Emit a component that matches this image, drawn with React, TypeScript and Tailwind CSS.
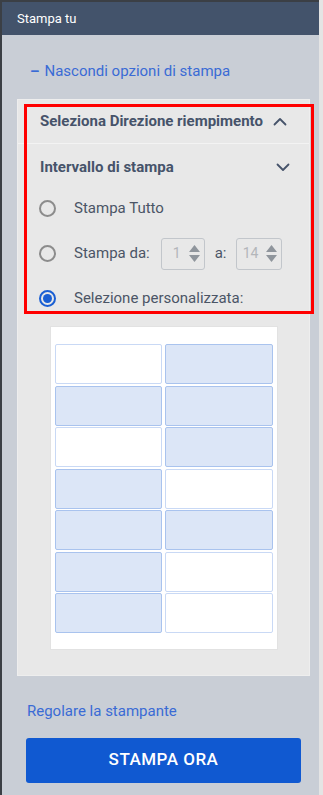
import { type ReactNode } from 'react';

const font = { fontFamily: 'Roboto, "Noto Sans", sans-serif' };

/** Selected state of each label cell, row by row (left, right) */
const labels: boolean[][] = [
  [false, true],
  [true, true],
  [false, true],
  [true, false],
  [true, true],
  [true, false],
  [true, false],
];

function Chevron({ up }: { up?: boolean }) {
  return (
    <svg className="h-[14px] w-[14px] text-[#46536a]" viewBox="0 0 14 14" fill="none" aria-hidden="true">
      <path
        d={up ? 'M1.5 9.5L7 4l5.5 5.5' : 'M1.5 4.5L7 10l5.5-5.5'}
        stroke="currentColor"
        strokeWidth={1.8}
        strokeLinecap="round"
        strokeLinejoin="round"
      />
    </svg>
  );
}

function Radio({ checked, children }: { checked?: boolean; children: ReactNode }) {
  return (
    <div className="flex h-[45px] items-center pl-[21px]">
      {checked ? (
        <span className="flex h-[17px] w-[17px] items-center justify-center rounded-full border-2 border-[#1a5fd3]">
          <span className="h-[9px] w-[9px] rounded-full bg-[#1a5fd3]" />
        </span>
      ) : (
        <span className="h-[17px] w-[17px] rounded-full border-2 border-[#8c8c8c]" />
      )}
      <div className="ml-[18px] flex items-center text-[15px] text-[#4b5566]">{children}</div>
    </div>
  );
}

function Spinner({ value, width }: { value: string; width: string }) {
  return (
    <div
      className={`flex h-[32px] ${width} items-center justify-end rounded-[3px] border border-[#c2c6cb] pr-[4px] text-[14px] text-[#b3b6ba]`}
    >
      <span className="mr-[8px]">{value}</span>
      <span className="flex flex-col gap-[3px]">
        <svg width="11" height="7" viewBox="0 0 11 7" aria-hidden="true">
          <path d="M5.5 0L11 7H0z" fill="#8f959c" />
        </svg>
        <svg width="11" height="7" viewBox="0 0 11 7" aria-hidden="true">
          <path d="M0 0h11L5.5 7z" fill="#8f959c" />
        </svg>
      </span>
    </div>
  );
}

export default function App() {
  return (
    <div className="flex h-[795px] w-[323px] bg-[#e4e4e4]" style={font}>
      <div className="relative flex h-full w-[319px] flex-col border-l-2 border-t-2 border-[#3b3f45] bg-[#c9ced6]">
        <div className="flex h-[33px] items-center bg-[#43536b] pl-[15px] text-[13px] text-white">
          Stampa tu
        </div>

        <div className="flex h-[64px] items-center pl-[28px] pt-[8px] text-[15px] text-[#3a6bd5]">
          <span className="mr-[5px] font-bold">–</span>Nascondi opzioni di stampa
        </div>

        <div className="ml-[15px] w-[293px] border border-[#eeeeee] bg-[#e8e8e8] pb-[25px]">
          <div className="flex h-[44px] items-center border-b border-[#f3f3f3] pl-[22px] text-[15px] font-bold text-[#46536a]">
            Seleziona Direzione riempimento
            <span className="ml-[10px]">
              <Chevron up />
            </span>
          </div>

          <div className="flex h-[42px] items-center justify-between pl-[22px] pr-[19px] pt-[4px] text-[15px] font-bold text-[#46536a]">
            Intervallo di stampa
            <Chevron />
          </div>

          <Radio>Stampa Tutto</Radio>
          <Radio>
            Stampa da:
            <div className="ml-[11px]">
              <Spinner value="1" width="w-[44px]" />
            </div>
            <span className="ml-[10px] mr-[10px]">a:</span>
            <Spinner value="14" width="w-[46px]" />
          </Radio>
          <Radio checked>Selezione personalizzata:</Radio>

          <div className="mx-auto mt-[5px] w-[228px] border border-[#e2e2e2] bg-white pb-[16px] pl-[4px] pr-[4px] pt-[17px]">
            <div className="grid grid-cols-2 gap-x-[3px] gap-y-[1.5px]">
              {labels.flat().map((on, i) => (
                <div
                  key={i}
                  className={
                    on
                      ? 'h-[40px] rounded-[2px] border border-[#a9c3ee] bg-[#dce6f7]'
                      : 'h-[40px] rounded-[2px] border border-[#c9d9f5] bg-white'
                  }
                />
              ))}
            </div>
          </div>
        </div>

        <div className="mt-[24px] pl-[25px] text-[15px] text-[#3a6bd5]">Regolare la stampante</div>

        <button
          type="button"
          className="ml-[24px] mt-[15px] flex h-[45px] w-[275px] items-center justify-center rounded-[3px] bg-[#1059d1] text-[17px] font-medium tracking-[0.5px] text-white"
        >
          STAMPA ORA
        </button>

        {/* annotation box */}
        <div className="pointer-events-none absolute left-[22px] top-[102px] h-[210px] w-[290px] border-[3px] border-[#ff0000]" />
      </div>
    </div>
  );
}
